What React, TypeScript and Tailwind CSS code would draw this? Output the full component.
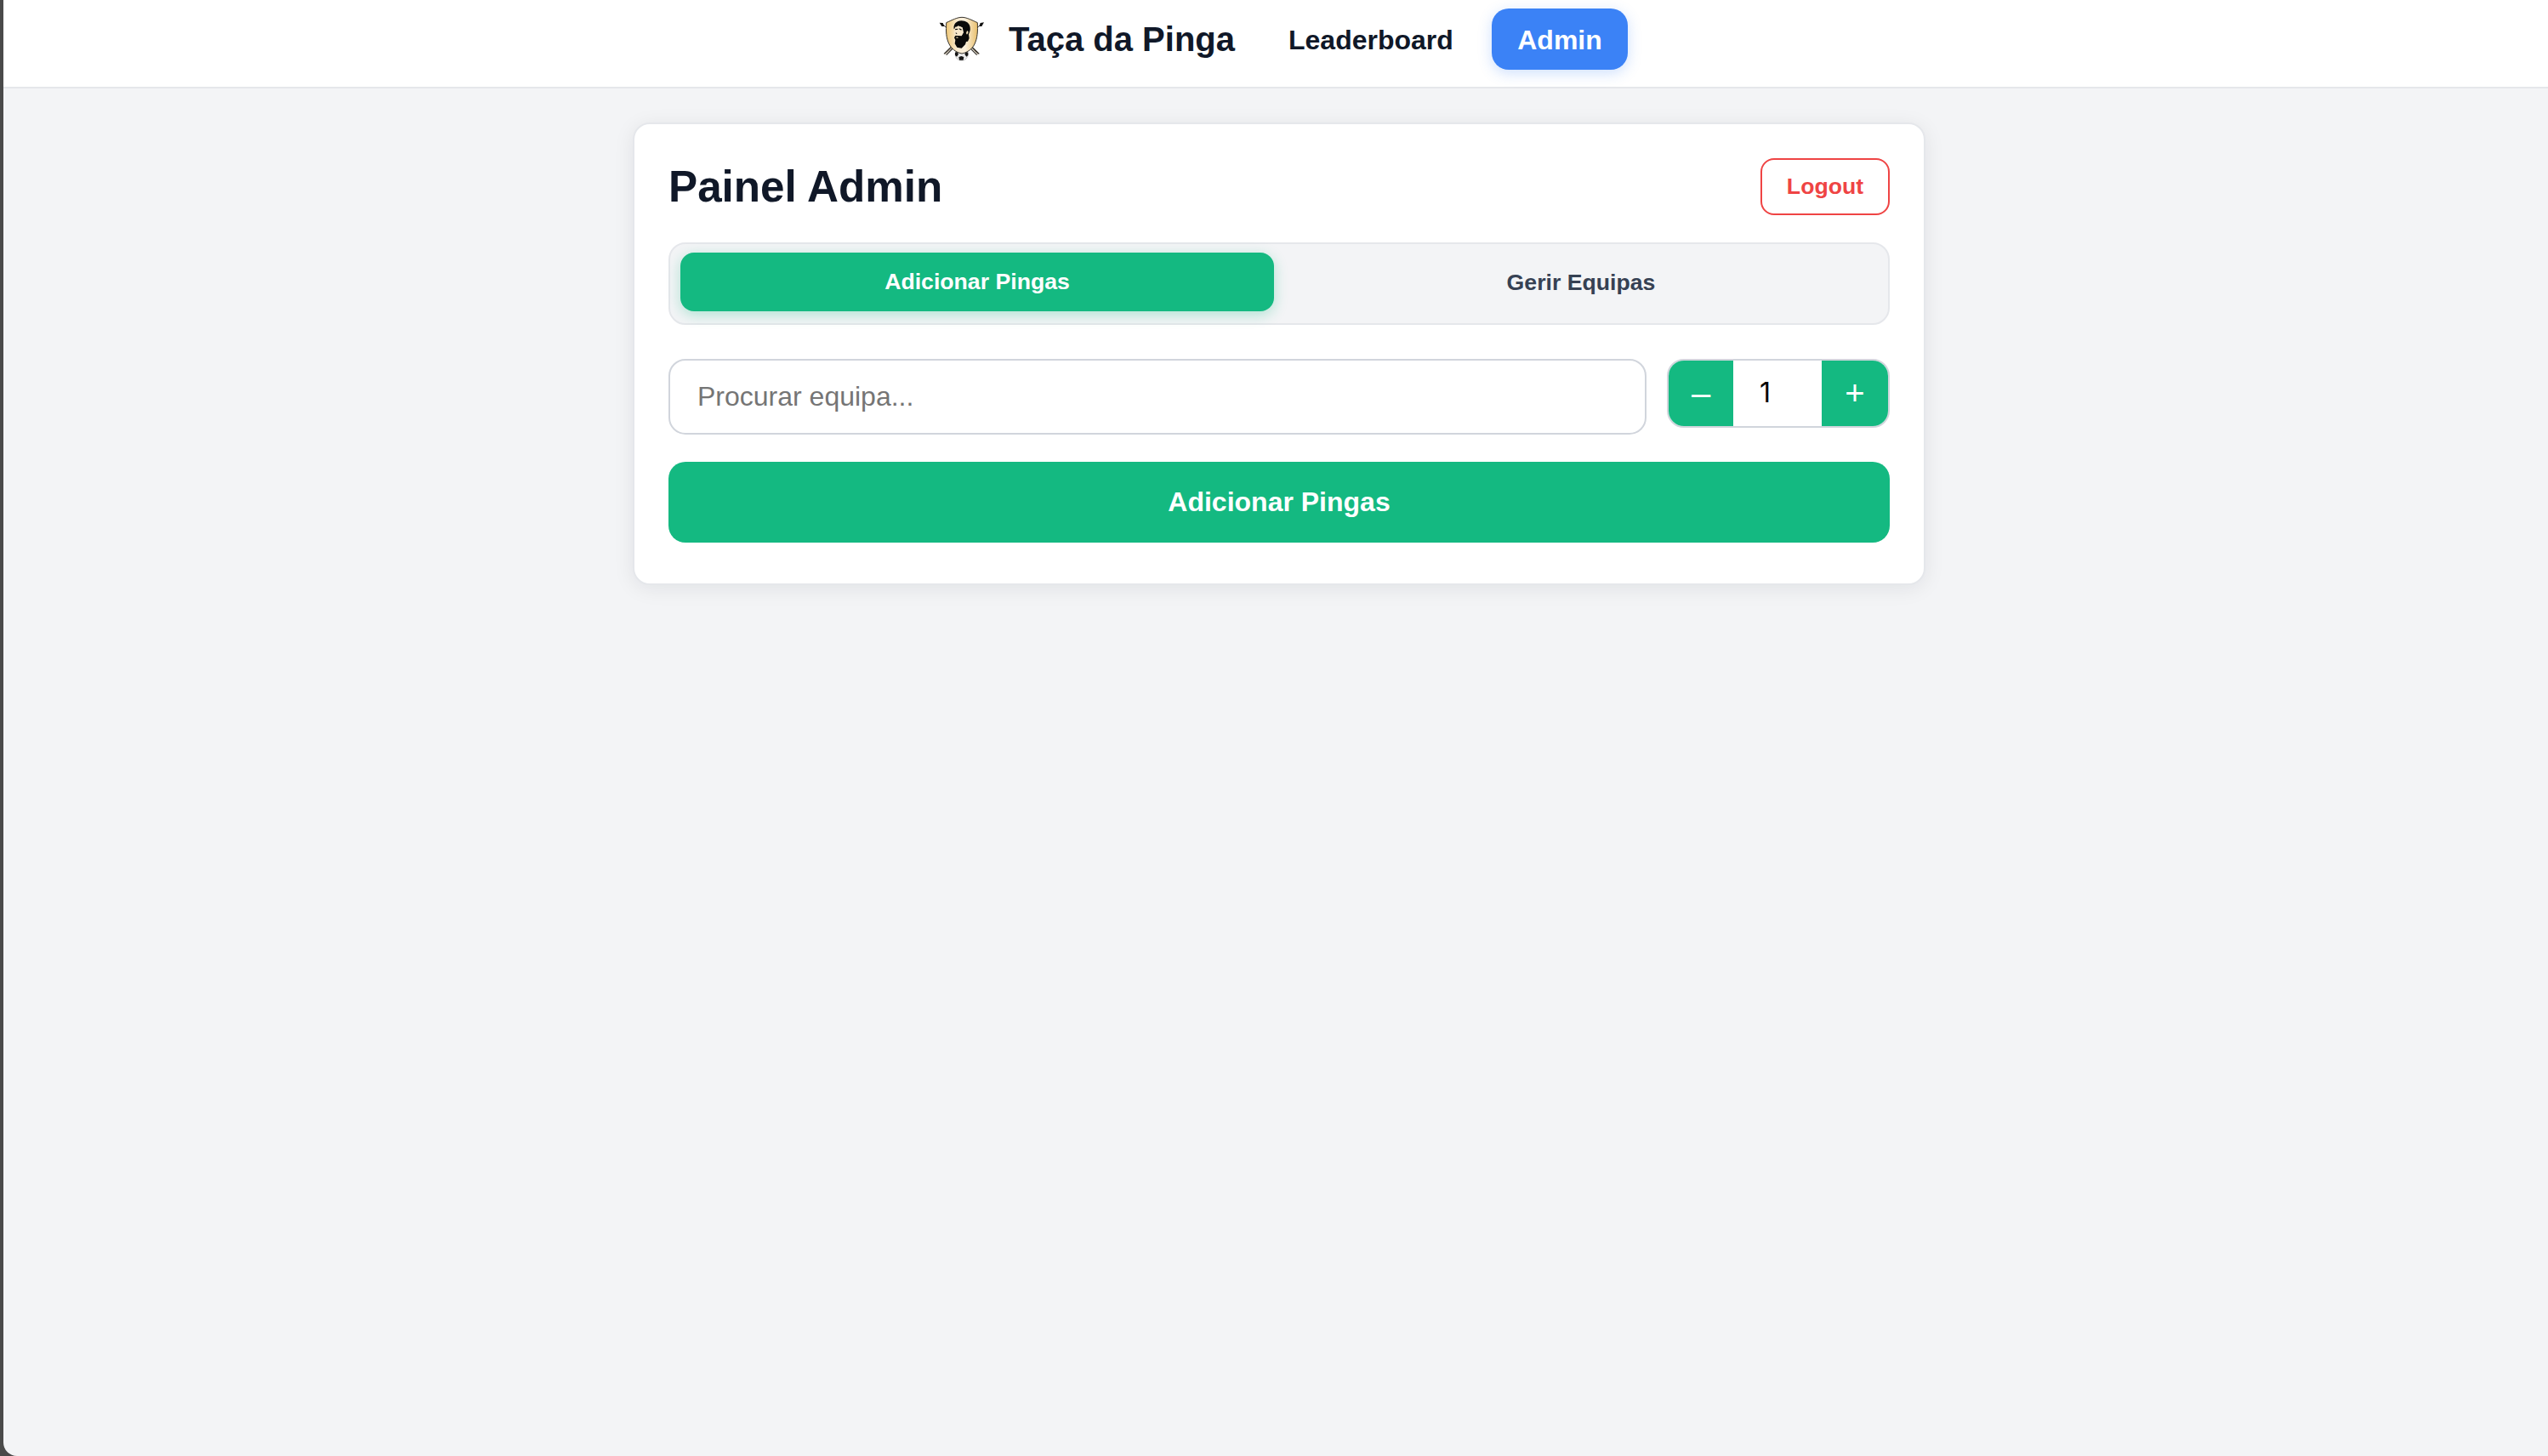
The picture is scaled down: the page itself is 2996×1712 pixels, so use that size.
import React from "react";

function Crest() {
  return (
    <svg className="h-[54px] w-[54px] shrink-0" viewBox="44 54 162 162" fill="none" aria-label="Taça da Pinga">
      <defs>
        <linearGradient id="shield" x1="70" y1="0" x2="180" y2="0" gradientUnits="userSpaceOnUse">
          <stop offset="0" stopColor="#eec778" />
          <stop offset="0.35" stopColor="#f9ead0" />
          <stop offset="0.6" stopColor="#fbf0dc" />
          <stop offset="1" stopColor="#e9bf6c" />
        </linearGradient>
      </defs>
      <circle cx="124" cy="188" r="23" fill="#ececec" stroke="#b5b5b5" strokeWidth="2" />
      <path d="M114 198l9-3 9 3-2 11h-14zM101 182l8-3 4 9-6 9-6-5zM147 182l-8-3-4 9 6 9 6-5z" fill="#161616" />
      <path d="M58 84L184 186M192 84L66 186" stroke="#3b352c" strokeWidth="3" />
      <path d="M62 187l26-25M70 191l24-24M186 187l-26-25M178 191l-24-24" stroke="#2d2923" strokeWidth="3.5" />
      <path d="M66 189l25-25M182 189l-25-25" stroke="#b5a78f" strokeWidth="3" />
      <path d="M46 77l12 1 5 12-9 0zM203 76l-13 2-4 12 9 0z" fill="#111" />
      <path d="M125 58C109 58 92 67 70 77C69 105 68 132 82 156C93 174 109 183 125 186C141 183 157 174 168 156C181 132 181 105 180 77C158 67 141 58 125 58Z" fill="url(#shield)" stroke="#37342e" strokeWidth="3" />
      <path d="M97 100C94 82 106 71 123 70C140 70 152 79 154 93C156 103 152 111 149 118L151 132L146 143L140 144L137 154L124 167L108 164L100 151L102 138L98 130L102 122L124 124L131 112L127 94L112 88Z" fill="#0a0a0a" />
      <path d="M101 92L119 90L126 99L128 112L124 123L110 120L102 122L97 115L99 105Z" fill="#f6e6ca" />
      <path d="M101 99l9-1 1 3-9 2zM115 97l9 3-1 4-8-4zM103 112l6 3-5 2z" fill="#0a0a0a" />
      <path d="M103 129q7-4 10 1-5 3-10-1zM143 106q6 0 4 7l-4 6-3-5z" fill="#f6e3bd" />
    </svg>
  );
}

function Header() {
  return (
    <header className="flex h-[104px] justify-center border-b-2 border-gray-200 bg-white pb-[10px] pl-[10px]">
      <nav className="flex w-[810px] items-center">
        <Crest />
        <span className="ml-[28px] w-[266px] whitespace-nowrap text-[40px] leading-[48px] font-bold text-gray-900">Taça da Pinga</span>
        <a className="ml-[63px] w-[194px] pt-[1px] text-[32px] leading-[40px] font-bold text-gray-900">Leaderboard</a>
        <a className="ml-auto flex h-[72px] w-[160px] items-center justify-center rounded-[20px] bg-[#3b82f6] pt-[1px] text-[32px] leading-[40px] font-bold text-white shadow-[0_4px_16px_rgba(59,130,246,0.25)]">
          Admin
        </a>
      </nav>
    </header>
  );
}

function Tabs() {
  return (
    <div className="mt-[32px] grid h-[97px] grid-cols-2 gap-3 rounded-[20px] border-2 border-gray-200 bg-gray-100 p-3 text-[26.67px] font-bold">
      <button className="-translate-y-[2px] rounded-[16px] bg-[#14b981] pb-[2px] text-white shadow-[0_4px_16px_rgba(16,185,129,0.3)]">
        Adicionar Pingas
      </button>
      <button className="rounded-[16px] pb-[3px] text-gray-700">Gerir Equipas</button>
    </div>
  );
}

function Stepper() {
  return (
    <div className="flex h-[81px] w-[262px] overflow-hidden rounded-[20px] border-2 border-gray-300 bg-white">
      <button className="w-[76px] bg-[#14b981] pb-[2px] text-[40px] leading-[46px] text-white">–</button>
      <input className="w-[104px] pb-[2px] pl-[31px] font-['Inter',sans-serif] text-[32px] text-black outline-none" defaultValue="1" />
      <button className="w-[78px] bg-[#14b981] pb-[2px] text-[40px] leading-[46px] text-white">+</button>
    </div>
  );
}

export default function App() {
  return (
    <div className="h-[1712px] w-[2996px] overflow-hidden bg-[#4a4a4a] font-['Liberation_Sans',Arial,sans-serif]">
      <div className="ml-1 h-[1712px] w-[3000px] overflow-hidden rounded-bl-[16px] bg-gray-100">
        <Header />
        <main className="mx-auto mt-[40px] h-[544px] w-[1520px] rounded-[20px] border-2 border-gray-200 bg-white p-10 shadow-[0_4px_24px_rgba(17,24,39,0.08)]">
          <div className="flex h-[67px] items-center justify-between">
            <h1 className="text-[51.2px] leading-[60px] font-bold text-gray-900">Painel Admin</h1>
            <button className="h-[67px] w-[152px] rounded-[16px] border-2 border-[#ef4444] pb-[2px] text-[26.67px] font-bold text-[#ef4444]">
              Logout
            </button>
          </div>
          <Tabs />
          <div className="mt-[40px] flex items-start justify-between">
            <input
              className="h-[89px] w-[1150px] rounded-[20px] border-2 border-gray-300 bg-white px-[32px] text-[32px] text-black outline-none placeholder:text-[#757575]"
              placeholder="Procurar equipa..."
            />
            <Stepper />
          </div>
          <button className="mt-[32px] h-[95px] w-full rounded-[20px] bg-[#14b981] pb-[2px] text-[32px] font-bold text-white">
            Adicionar Pingas
          </button>
        </main>
      </div>
    </div>
  );
}
